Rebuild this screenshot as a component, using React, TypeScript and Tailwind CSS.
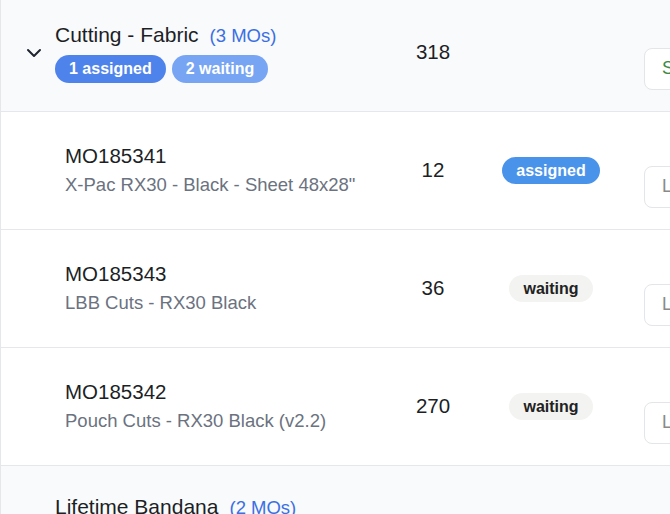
import { ChevronDown } from "lucide-react";

type MO = { id: string; name: string; qty: number; state: "assigned" | "waiting"; action: string };

const groups = [
  {
    title: "Cutting - Fabric",
    count: 3,
    qty: 318,
    assigned: 1,
    waiting: 2,
    orders: [
      { id: "MO185341", name: 'X-Pac RX30 - Black - Sheet 48x28"', qty: 12, state: "assigned", action: "Log" },
      { id: "MO185343", name: "LBB Cuts - RX30 Black", qty: 36, state: "waiting", action: "Log" },
      { id: "MO185342", name: "Pouch Cuts - RX30 Black (v2.2)", qty: 270, state: "waiting", action: "Log" },
    ] as MO[],
  },
  { title: "Lifetime Bandana", count: 2, qty: 96, assigned: 0, waiting: 2, orders: [] as MO[] },
];

export default function App() {
  return (
    <div className="w-[670px] h-[514px] overflow-hidden bg-white" style={{ fontFamily: '"Liberation Sans", Arial, sans-serif' }}>
      <div className="w-[900px] -mt-[6px] border-l border-[#e5e7eb]">
        {groups.map(g => (
          <div key={g.title}>
            {/* Group header */}
            <div className="flex items-center h-[118px] bg-[#f9fafb] border-b border-[#e5e7eb]">
              <div className="w-[372px] flex items-center">
                <div className="w-[54px] flex justify-center pl-[11px]">
                  <ChevronDown size={24} strokeWidth={2} className="text-[#1f2430]" />
                </div>
                <div className="flex flex-col gap-[6px]">
                  <div className="flex items-baseline gap-[11px] leading-[26px]">
                    <span className="text-[21px] text-[#1c1f26]">{g.title}</span>
                    <span className="text-[18.5px] text-[#3b6fe3]">({g.count} MOs)</span>
                  </div>
                  <div className="flex gap-[6px]">
                    {g.assigned > 0 && (
                      <span className="h-[28px] px-[14px] flex items-center rounded-full bg-[#4f83ec] text-white text-[16px] font-bold">
                        {g.assigned} assigned
                      </span>
                    )}
                    {g.waiting > 0 && (
                      <span className="h-[28px] px-[14px] flex items-center rounded-full bg-[#77a5f3] text-white text-[16px] font-bold">
                        {g.waiting} waiting
                      </span>
                    )}
                  </div>
                </div>
              </div>
              <div className="w-[120px] text-center text-[20.5px] text-[#1c1f26]">{g.qty}</div>
              <div className="w-[116px]" />
              <div className="pl-[35px] mt-[32px]">
                <button className="h-[42px] px-[17px] rounded-lg border border-[#e3e5e8] bg-white text-[18px] text-[#3d8a45]">
                  Start All
                </button>
              </div>
            </div>

            {/* Orders */}
            {g.orders.map(o => (
              <div key={o.id} className="flex items-center h-[118px] bg-white border-b border-[#e5e7eb]">
                <div className="w-[372px] pl-[64px] flex flex-col gap-[5px]">
                  <span className="text-[20.5px] leading-[24px] text-[#1c1f26]">{o.id}</span>
                  <span className="text-[18.5px] leading-[24px] text-[#6b7280]">{o.name}</span>
                </div>
                <div className="w-[120px] text-center text-[20.5px] text-[#1c1f26]">{o.qty}</div>
                <div className="w-[116px] flex justify-center">
                  {o.state === "assigned" ? (
                    <span className="h-[27px] px-[14px] flex items-center rounded-full bg-[#4a93ea] text-white text-[16px] font-bold">
                      assigned
                    </span>
                  ) : (
                    <span className="h-[27px] px-[14px] flex items-center rounded-full bg-[#f3f3f1] text-[#222] text-[16px] font-bold">
                      waiting
                    </span>
                  )}
                </div>
                <div className="pl-[35px] mt-[32px]">
                  <button className="h-[42px] px-[17px] rounded-lg border border-[#e3e5e8] bg-white text-[18px] text-[#8a8a8a]">
                    {o.action}
                  </button>
                </div>
              </div>
            ))}
          </div>
        ))}
      </div>
    </div>
  );
}
